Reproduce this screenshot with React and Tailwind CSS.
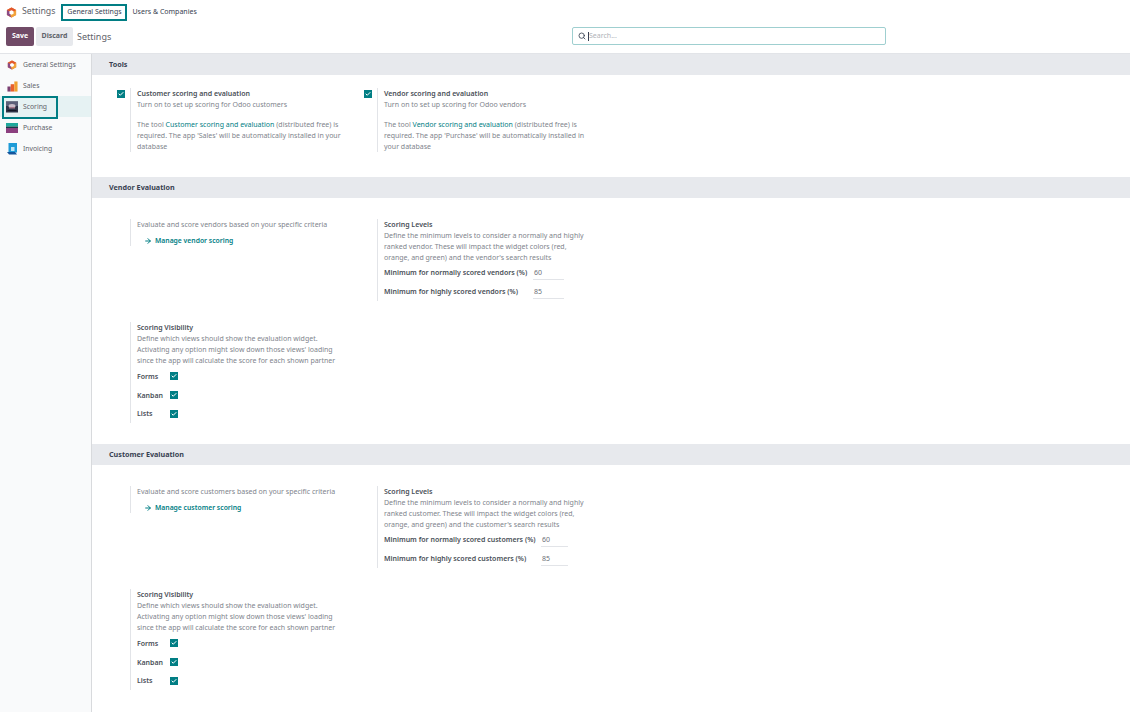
import { Search, ArrowRight, Check } from 'lucide-react'

const FONT = "font-['Noto_Sans',sans-serif]"

function OdooLogo({ size = 11 }) {
  return (
    <svg width={size} height={size} viewBox="0 0 24 24" className="shrink-0">
      <path d="M12 1 22 6.5v11L12 23 2 17.5v-11z" fill="#e8702a" />
      <path d="M2 6.5 12 1l10 5.5L12 12z" fill="#e2582c" />
      <path d="M2 6.5V17.500L12 23V12z" fill="#8a4a86" />
      <path d="M22 6.500V17.500L12 23l-3-6z" fill="#f2a33a" />
      <path d="M12 7l4.500 2.500v5L12 17l-4.500-2.500v-5z" fill="#fff" />
    </svg>
  )
}

function SalesIcon() {
  return (
    <svg width="11" height="11" viewBox="0 0 24 24" className="shrink-0">
      <rect x="1" y="12" width="7" height="11" fill="#7b3f73" />
      <rect x="8" y="7" width="8" height="16" fill="#e8602c" />
      <rect x="16" y="1" width="7" height="22" fill="#f0a030" />
    </svg>
  )
}

function ScoringIcon() {
  return (
    <svg width="12" height="12" viewBox="0 0 24 24" className="shrink-0">
      <rect x="0" y="1" width="24" height="22" fill="#2f3448" />
      <rect x="0" y="1" width="24" height="9" fill="#5b5f78" />
      <ellipse cx="12" cy="10" rx="7" ry="4" fill="#c8bcc8" />
      <rect x="6" y="12" width="12" height="3" fill="#a87a8c" />
      <rect x="3" y="18" width="18" height="2" fill="#151826" />
    </svg>
  )
}

function PurchaseIcon() {
  return (
    <svg width="12" height="10" viewBox="0 0 24 20" className="shrink-0">
      <rect x="0" y="0" width="24" height="7" fill="#1fa89c" />
      <rect x="0" y="7" width="24" height="3" fill="#143c4a" />
      <rect x="0" y="10" width="24" height="10" fill="#8c3f7f" />
    </svg>
  )
}

function InvoicingIcon() {
  return (
    <svg width="11" height="12" viewBox="0 0 22 24" className="shrink-0">
      <path d="M3 0h17v19H3z" fill="#1e9bd7" />
      <path d="M8 8h7v8H8z" fill="#bfe6f5" />
      <path d="M0 18h16l4 5H4z" fill="#14559c" />
    </svg>
  )
}

function Box() {
  return (
    <span className="w-[8px] h-[8px] bg-[#017e84] flex items-center justify-center shrink-0">
      <Check size={6} strokeWidth={4} className="text-white" />
    </span>
  )
}

const MENU = [
  { label: 'General Settings', icon: <OdooLogo size={10} /> },
  { label: 'Sales', icon: <SalesIcon /> },
  { label: 'Scoring', icon: <ScoringIcon />, active: true },
  { label: 'Purchase', icon: <PurchaseIcon /> },
  { label: 'Invoicing', icon: <InvoicingIcon /> },
]

function Sidebar() {
  return (
    <div className="w-[92px] shrink-0 bg-[#f9fafb] border-r border-[#d8dadd]">
      {MENU.map(m => (
        <div
          key={m.label}
          className={`relative h-[21px] flex items-center pl-[6px] pt-[1px] gap-[5px] text-[6.8px] text-[#5f636a] ${m.active ? 'bg-[#e6f2f3]' : ''}`}
        >
          <span className="w-[12px] flex justify-center">{m.icon}</span>
          <span>{m.label}</span>
          {m.active && (
            <span className="absolute left-[2px] top-[0px] w-[56px] h-[23px] border-2 border-[#017e84]" />
          )}
        </div>
      ))}
    </div>
  )
}

function SectionHeader({ children }) {
  return (
    <div className="h-[21px] bg-[#e7e9ed] flex items-center pl-[17px] text-[7.2px] font-bold text-[#374151]">
      {children}
    </div>
  )
}

// one setting: checkbox gutter, then a bordered text block
function Setting({ box, className = '', children }) {
  return (
    <div className={`flex w-[247px] ${className}`}>
      <div className="w-[13px] shrink-0 pt-[2px]">{box && <Box />}</div>
      <div className="border-l border-[#e2e4e8] pl-[6px] text-[7px] leading-[11px] text-[#80848c] whitespace-nowrap">
        {children}
      </div>
    </div>
  )
}

function Title({ children }) {
  return <div className="font-semibold text-[#4a5058]">{children}</div>
}

function ToolSetting({ title, intro, app, lastLine, line2 }) {
  return (
    <Setting box>
      <Title>{title}</Title>
      <div>{intro}</div>
      <div className="mt-[9px]">
        The tool <span className="text-[#017e84]">{title}</span> (distributed free) is
      </div>
      <div>required. The app '{app}' will be automatically installed {line2}</div>
      <div>{lastLine}</div>
    </Setting>
  )
}

function LevelRow({ label, value, labelWidth, inputWidth, className }) {
  return (
    <div className={`flex items-start ${className}`}>
      <span className="shrink-0 font-semibold text-[#4a5058] leading-[11px]" style={{ width: labelWidth }}>{label}</span>
      <span className="h-[13px] pl-[1px] border-b border-[#e2e4e8] text-[#6b7078] leading-[11px]" style={{ width: inputWidth }}>{value}</span>
    </div>
  )
}

function Evaluation({ heading, desc, link, partner, label, labelWidth, inputWidth }) {
  return (
    <div>
      <SectionHeader>{heading}</SectionHeader>
      <div className="pl-[25px] pt-[21px] pb-[21px]">
        <div className="flex items-start">
          <Setting>
            <div>{desc}</div>
            <div className="mt-[5px] h-[11px] flex items-center gap-[3px] pl-[7px] text-[6.8px] font-semibold text-[#017e84]">
              <ArrowRight size={8} strokeWidth={3} />
              <span>{link}</span>
            </div>
          </Setting>
          <Setting>
            <Title>Scoring Levels</Title>
            <div>Define the minimum levels to consider a normally and highly</div>
            <div>ranked {partner}. These will impact the widget colors (red,</div>
            <div>orange, and green) and the {partner}'s search results</div>
            <div className="mt-[4px]">
              <LevelRow className="h-[19px]" label={`Minimum for normally scored ${label} (%)`} value="60" labelWidth={labelWidth} inputWidth={inputWidth} />
              <LevelRow className="h-[15px]" label={`Minimum for highly scored ${label} (%)`} value="85" labelWidth={labelWidth} inputWidth={inputWidth} />
            </div>
          </Setting>
        </div>
        <Setting className="mt-[21px]">
          <Title>Scoring Visibility</Title>
          <div>Define which views should show the evaluation widget.</div>
          <div>Activating any option might slow down those views' loading</div>
          <div>since the app will calculate the score for each shown partner</div>
          <div className="mt-[1px]">
            {['Forms', 'Kanban', 'Lists'].map(v => (
              <div key={v} className="flex items-center h-[18.7px]">
                <span className="w-[33px] font-semibold text-[#4a5058]">{v}</span>
                <Box />
              </div>
            ))}
          </div>
        </Setting>
      </div>
    </div>
  )
}

export default function App() {
  return (
    <div className={`w-[1130px] h-[712px] overflow-hidden bg-white flex flex-col ${FONT}`}>
      {/* top bar */}
      <div className="h-[24px] shrink-0 flex items-center pl-[6px]">
        <OdooLogo />
        <span className="ml-[5px] text-[8.800px] text-[#5f636a]">Settings</span>
        <span className="ml-[6px] h-[17px] w-[66px] border-2 border-[#017e84] flex items-center justify-center text-[7px] text-[#374151] whitespace-nowrap">
          General Settings
        </span>
        <span className="ml-[5px] text-[7px] text-[#374151]">Users &amp; Companies</span>
      </div>

      {/* control panel */}
      <div className="h-[30px] shrink-0 flex items-start pl-[6px] pt-[3px] border-b border-[#e2e4e8]">
        <button className="w-[28px] h-[19px] rounded-[2px] bg-[#714b67] text-white text-[7px] font-bold">Save</button>
        <button className="ml-[2px] w-[37px] h-[19px] rounded-[2px] bg-[#e7e9ed] text-[#5f636a] text-[7px] font-bold">Discard</button>
        <span className="ml-[4px] w-[34px] h-[19px] flex items-center text-[9px] text-[#5f636a]">Settings</span>
        <div className="ml-[461px] w-[314px] h-[18px] rounded-[2px] border border-[#9fcfd0] flex items-center pl-[5px] gap-[2px]">
          <Search size={8} strokeWidth={2.5} className="text-[#374151]" />
          <span className="border-l border-[#374151] h-[9px] flex items-center text-[7px] text-[#b0b3b8]">Search...</span>
        </div>
      </div>

      <div className="flex-1 flex min-h-0">
        <Sidebar />
        <div className="flex-1 min-w-0">
          <SectionHeader>Tools</SectionHeader>
          <div className="flex pl-[25px] pt-[13px] pb-[25px]">
            <ToolSetting
              title="Customer scoring and evaluation"
              intro="Turn on to set up scoring for Odoo customers"
              app="Sales"
              line2="in your"
              lastLine="database"
            />
            <ToolSetting
              title="Vendor scoring and evaluation"
              intro="Turn on to set up scoring for Odoo vendors"
              app="Purchase"
              line2="in"
              lastLine="your database"
            />
          </div>
          <Evaluation
            heading="Vendor Evaluation"
            desc="Evaluate and score vendors based on your specific criteria"
            link="Manage vendor scoring"
            partner="vendor"
            label="vendors"
            labelWidth={149}
            inputWidth={31}
          />
          <Evaluation
            heading="Customer Evaluation"
            desc="Evaluate and score customers based on your specific criteria"
            link="Manage customer scoring"
            partner="customer"
            label="customers"
            labelWidth={157}
            inputWidth={27}
          />
        </div>
      </div>
    </div>
  )
}
